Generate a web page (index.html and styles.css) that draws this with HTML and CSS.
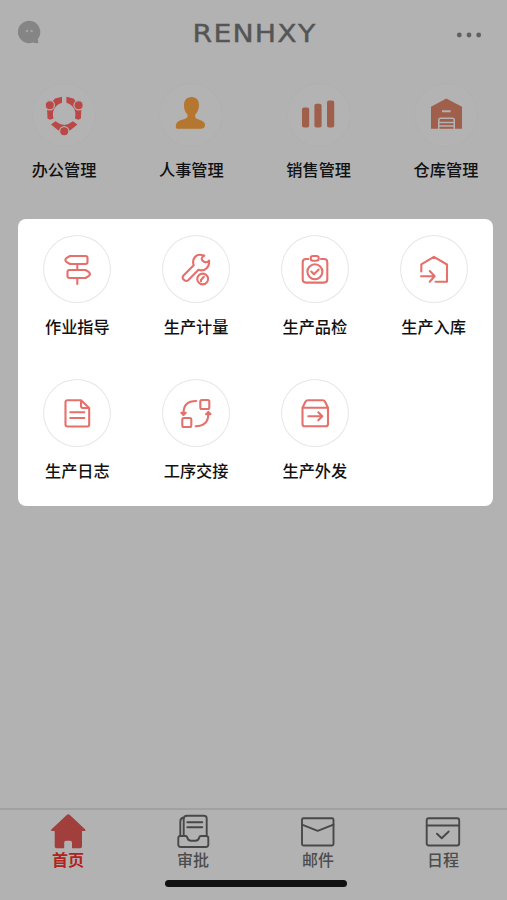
FILE: index.html
```html
<!DOCTYPE html>
<html lang="zh-CN">
<head>
    <title>RENHXY</title>
    <link rel="stylesheet" href="styles.css">
    <meta charset="UTF-8">
    <meta name="viewport" content="width=device-width, initial-scale=1.0">
</head>
<body class="page">
    <header>
        <svg class="chat" viewBox="0 0 24 24">
            <path d="M12 .8a11.2 11.2 0 1 0 4 21.7c2 .8 4 .9 5.6.6-.6-1-.8-2.500-.7-4.300A11.200 11.200 0 0 0 12 .8z"/>
            <circle class="eye" cx="10" cy="11" r="1.200"/>
            <circle class="eye" cx="14.600" cy="11" r="1.200"/>
        </svg>
        <h1 class="logo">RENHXY</h1>
        <svg class="more" viewBox="0 0 26 6">
            <circle cx="3.300" cy="3" r="2.400"/>
            <circle cx="13" cy="3" r="2.400"/>
            <circle cx="22.700" cy="3" r="2.400"/>
        </svg>
    </header>

    <section class="modules">
        <a class="item">
            <svg class="module-icon red" viewBox="0 0 62 62">
                <g id="person">
                    <path d="M29 12.800L22 14.500L14 24L14.500 34.500L17 35.700L20.500 34.500C18.500 27 22 21 29 18.800Z"/>
                    <circle class="head" cx="16.800" cy="21.200" r="4.600"/>
                </g>
                <use href="#person" transform="translate(62.400 0) scale(-1 1)"/>
                <path d="M18 40.500L22.500 37.300Q31.200 44.500 39.900 37.300L44.400 40.500L37 46.500H25.400Z"/>
                <circle class="head" cx="31.200" cy="47.300" r="4.600"/>
            </svg>
            <span>办公管理</span>
        </a>
        <a class="item">
            <svg class="module-icon orange" viewBox="0 0 62 62">
                <path d="M31.500 13c5 0 7.700 3.500 7.500 8.500-.2 4-1.500 7-3.800 9v2.500c0 1.300 1.500 1.700 4 2.700 4 1.500 5.800 2.500 5.800 5.300 0 2.500-1.500 3.800-4 3.800H18c-1.500 0-2.300-.6-2.200-2 .2-4.500 2.200-5.600 6.200-7 2.500-.9 5.500-1.500 5.500-3.300v-2c-2.300-2-3.400-5-3.500-9-.1-5 2.500-8.500 7.500-8.500z"/>
            </svg>
            <span>人事管理</span>
        </a>
        <a class="item">
            <svg class="module-icon brown" viewBox="0 0 62 62">
                <rect x="14" y="23.500" width="7.200" height="20" rx="2"/>
                <rect x="26.400" y="19.800" width="7.200" height="23.700" rx="2"/>
                <rect x="39" y="16.500" width="7.200" height="27" rx="2"/>
            </svg>
            <span>销售管理</span>
        </a>
        <a class="item">
            <svg class="module-icon brown" viewBox="0 0 62 62">
                <path d="M31.300 14.500L47 22.700V44.800H40V36q0-2.500-2.500-2.500H25.500q-2.500 0-2.500 2.500V44.800H16V22.700Z"/>
                <path class="cut" d="M27 27.300H35.700"/>
                <path d="M24.500 36q0-1 1-1H37.500q1 0 1 1V37.800H24.500zM24.500 39.300H38.500V41.300H24.500zM24.500 42.800H38.500V44.800H24.500z"/>
            </svg>
            <span>仓库管理</span>
        </a>
    </section>

    <main class="panel">
        <a class="item">
            <svg class="panel-icon" viewBox="0 0 68 68">
                <path d="M27 21H42.500q2 0 2 2V27q0 2-2 2H27L23.300 26.800Q21.400 25 23.300 23.200zM34.300 29V35M26.500 35H42.500L46 37.200Q47.800 39 46 40.800L42.500 43H26.500q-2 0-2-2V37q0-2 2-2zM34.300 43V49"/>
            </svg>
            <span>作业指导</span>
        </a>
        <a class="item">
            <svg class="panel-icon" viewBox="0 0 68 68">
                <path d="M39.800 20C34 18.500 29.500 24 31.700 30.300L21.500 40.500Q19.800 42.500 21.500 44.600Q24 47 26.200 45.200L36.500 34.800C42.500 37 48 32 47 25.500Q45 28.300 42 26.700C38.700 25 39 22 42.300 20.700Q41 20 39.800 20z"/>
                <circle class="mask" cx="40.700" cy="44" r="7.200"/>
                <circle cx="40.700" cy="44" r="5.400"/>
                <path d="M39 46.300V45L41.800 41.800"/>
            </svg>
            <span>生产计量</span>
        </a>
        <a class="item">
            <svg class="panel-icon" viewBox="0 0 68 68">
                <path d="M27.300 24H25q-3.300 0-3.300 3.300V44.300q0 3.300 3.300 3.300H43q3.300 0 3.300-3.300V27.300q0-3.300-3.300-3.300H40"/>
                <rect x="29.700" y="21" width="8" height="4.800" rx="2.200"/>
                <circle cx="33.900" cy="36.700" r="7.500"/>
                <path d="M30.300 36.500L33 39.200L37.700 34.500"/>
            </svg>
            <span>生产品检</span>
        </a>
        <a class="item">
            <svg class="panel-icon" viewBox="0 0 68 68">
                <path d="M21.300 36.500V29.300L33.900 21.800L47 29.500V46.700H35.500M21 41.300H34.500M29.700 36L34.700 41.300L29.700 46.700"/>
            </svg>
            <span>生产入库</span>
        </a>
        <a class="item">
            <svg class="panel-icon" viewBox="0 0 68 68">
                <path d="M38 21.200H24.500q-2 0-2 2V45.500q0 2 2 2H44.200q2 0 2-2V29zM38 21.200V27q0 2 2 2H46.200M27.300 33.300H41.300M27.300 39H41.300"/>
            </svg>
            <span>生产日志</span>
        </a>
        <a class="item">
            <svg class="panel-icon" viewBox="0 0 68 68">
                <rect x="38.300" y="21" width="9" height="9" rx="1.500"/>
                <rect x="20.300" y="39" width="9" height="9" rx="1.500"/>
                <path d="M34.200 22C26 22 21.500 26 21.500 34M33.700 47.300C41.500 47 46.300 43 46.300 35"/>
                <path class="arrow" d="M19.300 33.700H23.700L21.500 36zM44.100 35.300H48.500L46.300 33z"/>
            </svg>
            <span>工序交接</span>
        </a>
        <a class="item">
            <svg class="panel-icon" viewBox="0 0 68 68">
                <path d="M21.500 28.700L24.300 23q.9-1.800 2.800-1.800H41.400q1.900 0 2.800 1.800L47 28.700V45q0 2.300-2.300 2.300H23.800q-2.300 0-2.300-2.300zM21.500 28.700H47M27.300 37.300H41M37.300 33.300L41.300 37.300L37.300 41.300"/>
            </svg>
            <span>生产外发</span>
        </a>
    </main>

    <footer>
        <nav>
            <a class="tab active">
                <svg viewBox="0 0 36 36">
                    <path d="M17 1.800Q18.300.8 19.600 1.800L35.300 16.500Q36 18 34.500 18H32V33.500Q32 35.300 30.200 35.300H22V29.500Q22 27.700 20.200 27.700H16Q14.200 27.700 14.200 29.500V35.300H6.500Q4.700 35.300 4.700 33.500V18H2Q.5 18 1.300 16.500Z"/>
                </svg>
                <span>首页</span>
            </a>
            <a class="tab">
                <svg viewBox="0 0 36 36">
                    <path d="M8.700 23V6Q8.700 2.800 12 2.800H29Q31.700 2.800 31.700 5.500V23M8.700 4.500Q5.300 5 5.300 8.500V23M12.300 9.300H27.300M12.300 14.300H27.300M5.300 23H10.500Q12 23 12.300 24.500Q13 27.700 16 27.700H20.500Q23.500 27.700 24.200 24.500Q24.500 23 26 23H31Q33.300 23 33.300 25.300V31.500Q33.300 34 30.800 34H5.800Q3.300 34 3.300 31.500V25.300Q3.300 23 5.300 23"/>
                </svg>
                <span>审批</span>
            </a>
            <a class="tab">
                <svg viewBox="0 0 36 36">
                    <rect x="2" y="5.200" width="31.500" height="27.300" rx="1.500"/>
                    <path d="M2 11.700L17.700 17.800L33.500 11.700"/>
                </svg>
                <span>邮件</span>
            </a>
            <a class="tab">
                <svg viewBox="0 0 36 36">
                    <rect x="1.700" y="5.200" width="32.500" height="27.300" rx="2"/>
                    <path d="M1.700 12.500H34.200M12 20.700L16.700 25.300L23.700 18.500"/>
                </svg>
                <span>日程</span>
            </a>
        </nav>
        <div class="home-bar"></div>
    </footer>
</body>
</html>
```
FILE: styles.css
```css
:root{
--bg: #b2b2b2;
--line-red: #e5706c;
}

*{
box-sizing: border-box;
}

.page{
margin: 0;
height: 900px;
overflow: hidden;
display: flex;
flex-direction: column;
background: var(--bg);
color: #111;
font-family: "Noto Sans CJK SC", sans-serif;
}

header{
height: 68px;
padding: 0 25px 0 17px;
display: flex;
align-items: center;
justify-content: space-between;
}

.chat{
width: 24px;
height: 24px;
margin-bottom: 4px;
fill: #858585;
}

.chat .eye{
fill: #a5a5a5;
}

.logo{
margin: 0 0 1px 12px;
font: 400 24px/30px "DejaVu Sans", sans-serif;
letter-spacing: 1px;
color: #555;
-webkit-text-stroke: 0.4px #555;
transform: scaleX(1.18);
}

.more{
width: 26px;
height: 6px;
margin-top: 2px;
fill: #606060;
}

.item{
display: flex;
flex-direction: column;
align-items: center;
font-size: 16.2px;
font-weight: 500;
line-height: 24px;
white-space: nowrap;
}

.modules{
height: 151px;
padding: 16px 27px 0 30px;
display: flex;
justify-content: space-between;
}

.modules .item{
width: 68px;
gap: 11px;
}

.module-icon{
width: 62px;
height: 62px;
border-radius: 50%;
background: #b3b3b3;
box-shadow: 0 0 0 1px #b0b0b0;
}

.red{
fill: #b94846;
}

.orange{
fill: #b5762f;
}

.brown{
fill: #a05f4b;
}

.module-icon .head{
stroke: var(--bg);
stroke-width: 1.2;
}

.module-icon .cut{
stroke: var(--bg);
stroke-width: 2;
}

.panel{
width: 475px;
height: 287px;
margin-left: 18px;
padding-top: 16px;
display: grid;
grid-template-columns: repeat(4, 1fr);
grid-template-rows: 144px 110px;
background: #fff;
border-radius: 8px;
}

.panel .item{
gap: 11px;
}

.panel-icon{
width: 68px;
height: 68px;
border-radius: 50%;
box-shadow: inset 0 0 0 1px #e6e6e6;
fill: none;
stroke: var(--line-red);
stroke-width: 2.1;
stroke-linecap: round;
stroke-linejoin: round;
}

.panel-icon .mask{
fill: #fff;
stroke: none;
}

.panel-icon .arrow{
fill: var(--line-red);
}

footer{
height: 92px;
margin-top: auto;
border-top: 2px solid #a1a1a1;
}

nav{
height: 70px;
padding: 3px 46px 0 50px;
display: flex;
justify-content: space-between;
}

.tab{
width: 36px;
display: flex;
flex-direction: column;
align-items: center;
font-size: 16px;
font-weight: 500;
line-height: 24px;
color: #4c4c4c;
}

.tab svg{
width: 36px;
height: 36px;
fill: none;
stroke: #484848;
stroke-width: 1.9;
stroke-linecap: round;
stroke-linejoin: round;
}

.tab span{
margin-top: -2px;
}

.tab.active{
color: #b3221c;
font-weight: 700;
}

.tab.active svg{
fill: #a03f3c;
stroke: none;
}

.home-bar{
width: 182px;
height: 7px;
margin-left: 165px;
border-radius: 4px;
background: #111;
}
```
